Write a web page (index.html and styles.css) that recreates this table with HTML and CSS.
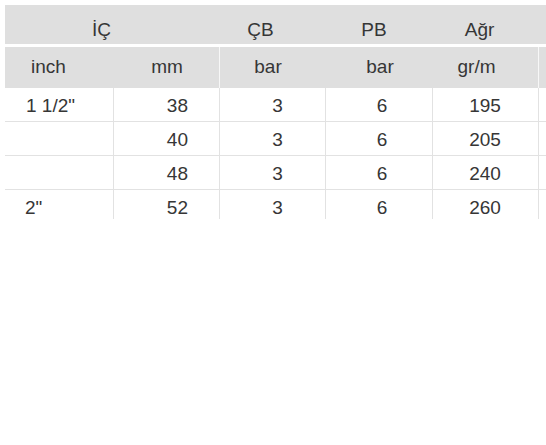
FILE: index.html
```html
<!DOCTYPE html>
<html lang="tr">
<head>
<meta charset="utf-8">
<title>Ölçü tablosu</title>
<link rel="stylesheet" href="styles.css">
</head>
<body>
<div class="wrap">
  <table class="spec">
    <colgroup>
      <col class="c1"><col class="c2"><col class="c3"><col class="c4"><col class="c5"><col class="c6">
    </colgroup>
    <thead>
      <tr class="h1">
        <th colspan="2" class="h1-ic">İÇ</th>
        <th class="h1-cb">ÇB</th>
        <th class="h1-pb">PB</th>
        <th class="h1-agr">Ağr</th>
        <th></th>
      </tr>
      <tr class="h2">
        <th class="h2-inch">inch</th>
        <th class="h2-mm sep">mm</th>
        <th class="h2-bar1">bar</th>
        <th class="h2-bar2">bar</th>
        <th class="h2-grm sep">gr/m</th>
        <th class="last"></th>
      </tr>
    </thead>
    <tbody>
      <tr>
        <td class="b-inch">1 1/2"</td><td class="b-mm">38</td><td class="b-cb">3</td><td class="b-pb">6</td><td class="b-gr">195</td><td class="last"></td>
      </tr>
      <tr>
        <td class="b-inch"></td><td class="b-mm">40</td><td class="b-cb">3</td><td class="b-pb">6</td><td class="b-gr">205</td><td class="last"></td>
      </tr>
      <tr>
        <td class="b-inch"></td><td class="b-mm">48</td><td class="b-cb">3</td><td class="b-pb">6</td><td class="b-gr">240</td><td class="last"></td>
      </tr>
      <tr>
        <td class="b-inch b-inch2">2"</td><td class="b-mm">52</td><td class="b-cb">3</td><td class="b-pb">6</td><td class="b-gr">260</td><td class="last"></td>
      </tr>
    </tbody>
  </table>
</div>
</body>
</html>
```

FILE: styles.css
```css
html, body {
  margin: 0;
  padding: 0;
  background: #ffffff;
  overflow: hidden;
}

.wrap {
  margin: 5px 0 0 5px;
  width: 541px;
  height: 214px;
  overflow: hidden;
}

.spec {
  table-layout: fixed;
  width: 634px;
  border-collapse: separate;
  border-spacing: 0;
  font-family: "Liberation Sans", Arial, sans-serif;
  font-size: 19px;
  line-height: 22px;
  color: #363636;
}

.c1 { width: 109px; }
.c2 { width: 106px; }
.c3 { width: 106px; }
.c4 { width: 107px; }
.c5 { width: 106px; }
.c6 { width: 100px; }

.spec th,
.spec td {
  box-sizing: border-box;
  font-weight: normal;
  white-space: nowrap;
  overflow: hidden;
}

/* header row 1 */
.h1 th {
  background: #dfdfdf;
  border-bottom: 3px solid #ffffff;
  padding: 14px 0 3px 0;
  height: 42px;
  text-align: center;
}
.h1-ic { padding-right: 22px !important; }
.h1-cb { padding-right: 25px !important; }
.h1-pb { padding-right: 11px !important; }
.h1-agr { padding-right: 13px !important; }

/* header row 2 */
.h2 th {
  background: #dfdfdf;
  padding: 9px 0 10px 0;
  height: 41px;
  text-align: center;
  border-right: 1px solid #dfdfdf;
}
.h2 th.sep { border-right-color: #f7f7f7; }
.h2 th.last { border-right: 0; }
.h2-inch { text-align: left !important; padding-left: 26px !important; }
.h2-mm { padding-left: 1px !important; }
.h2-bar1 { padding-right: 9px !important; }
.h2-bar2 { padding-left: 2px !important; }
.h2-grm { padding-right: 18px !important; }

/* body rows */
.spec td {
  height: 34px;
  padding: 7px 0 4px 0;
  border-bottom: 1px solid #e2e2e2;
  border-right: 1px solid #e2e2e2;
  text-align: center;
}
.spec td.last { border-right: 0; }
.b-inch { text-align: left !important; padding-left: 21px !important; }
.b-inch2 { padding-left: 20px !important; }
.b-mm { text-align: right !important; padding-right: 31px !important; }
.b-cb { padding-left: 10px !important; }
.b-pb { padding-left: 6px !important; }
.b-gr { padding-right: 1px !important; }
```
